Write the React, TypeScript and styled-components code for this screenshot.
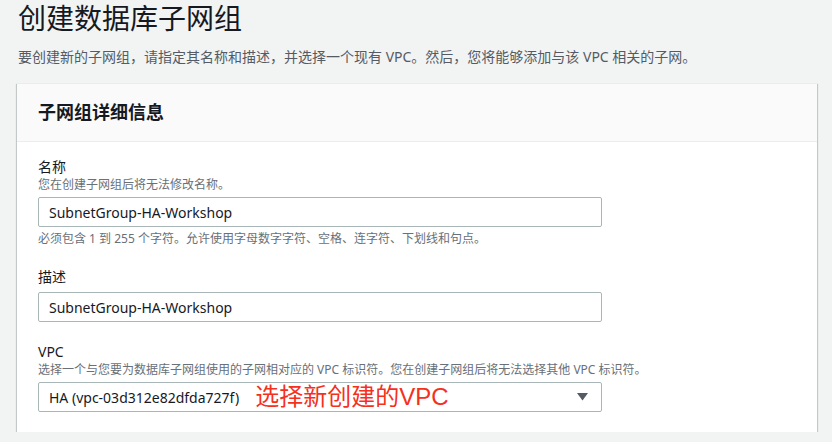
import styled, { createGlobalStyle } from "styled-components";

const GlobalStyle = createGlobalStyle`
  html, body {
    margin: 0;
    padding: 0;
    background: #f2f3f3;
    font-family: "Noto Sans", "Noto Sans CJK SC", sans-serif;
    color: #16191f;
  }
`;

const Page = styled.div`
  padding: 0 15px 0 17px;
`;

const Title = styled.h1`
  margin: 0;
  font-size: 28px;
  font-weight: 400;
  line-height: 36px;
  padding-left: 1px;
  color: #16191f;
`;

const Intro = styled.p`
  margin: 11px 0 16px 1px;
  font-size: 14px;
  line-height: 20px;
  color: #545b64;
`;

const Card = styled.section`
  width: 800px;
  background: #fff;
  box-shadow: 0 1px 1px 0 rgba(0, 28, 36, 0.3),
    1px 1px 1px 0 rgba(0, 28, 36, 0.15), -1px 1px 1px 0 rgba(0, 28, 36, 0.15);
  border-top: 1px solid #eaeded;
`;

const CardHeader = styled.header`
  background: #fafafa;
  border-bottom: 1px solid #eaeded;
  padding: 16px 21px 17px;
`;

const CardTitle = styled.h2`
  margin: 0;
  font-size: 18px;
  font-weight: 700;
  line-height: 24px;
`;

const CardBody = styled.div`
  padding: 15px 21px 20px;
  display: flex;
  flex-direction: column;
  gap: 20px;
`;

const Field = styled.div`
  display: flex;
  flex-direction: column;
`;

const Label = styled.label`
  font-size: 14px;
  line-height: 20px;
  color: #16191f;
`;

const Hint = styled.div<{ $top?: number }>`
  font-size: 12px;
  line-height: 16px;
  color: #687078;
  margin-top: ${(p) => p.$top ?? 0}px;
`;

const Control = styled.div<{ $top: number }>`
  box-sizing: border-box;
  width: 564px;
  height: 30px;
  margin-top: ${(p) => p.$top}px;
  border: 1px solid #aab7b8;
  border-radius: 2px;
  background: #fff;
  display: flex;
  align-items: center;
  padding: 0 13px 0 10px;
  font-size: 14px;
  color: #16191f;
  white-space: nowrap;
`;

const Note = styled.span`
  margin-left: 16px;
  font-family: "Liberation Sans", "Noto Sans CJK SC", sans-serif;
  font-size: 24px;
  color: #f5301e;
  line-height: 1;
`;

const Arrow = styled.svg`
  margin-left: auto;
  flex: none;
`;

export default function App() {
  return (
    <>
      <GlobalStyle />
      <Page>
        <Title>创建数据库子网组</Title>
        <Intro>
          要创建新的子网组，请指定其名称和描述，并选择一个现有 VPC。然后，您将能够添加与该 VPC 相关的子网。
        </Intro>
        <Card>
          <CardHeader>
            <CardTitle>子网组详细信息</CardTitle>
          </CardHeader>
          <CardBody>
            <Field>
              <Label>名称</Label>
              <Hint>您在创建子网组后将无法修改名称。</Hint>
              <Control $top={4}>SubnetGroup-HA-Workshop</Control>
              <Hint $top={4}>
                必须包含 1 到 255 个字符。允许使用字母数字字符、空格、连字符、下划线和句点。
              </Hint>
            </Field>
            <Field>
              <Label>描述</Label>
              <Control $top={5}>SubnetGroup-HA-Workshop</Control>
            </Field>
            <Field>
              <Label>VPC</Label>
              <Hint>
                选择一个与您要为数据库子网组使用的子网相对应的 VPC 标识符。您在创建子网组后将无法选择其他 VPC 标识符。
              </Hint>
              <Control $top={4}>
                HA (vpc-03d312e82dfda727f)
                <Note>选择新创建的VPC</Note>
                <Arrow width="11" height="8" viewBox="0 0 11 8">
                  <path d="M0 0 H11 L5.5 7.5 Z" fill="#545b64" />
                </Arrow>
              </Control>
            </Field>
          </CardBody>
        </Card>
      </Page>
    </>
  );
}
